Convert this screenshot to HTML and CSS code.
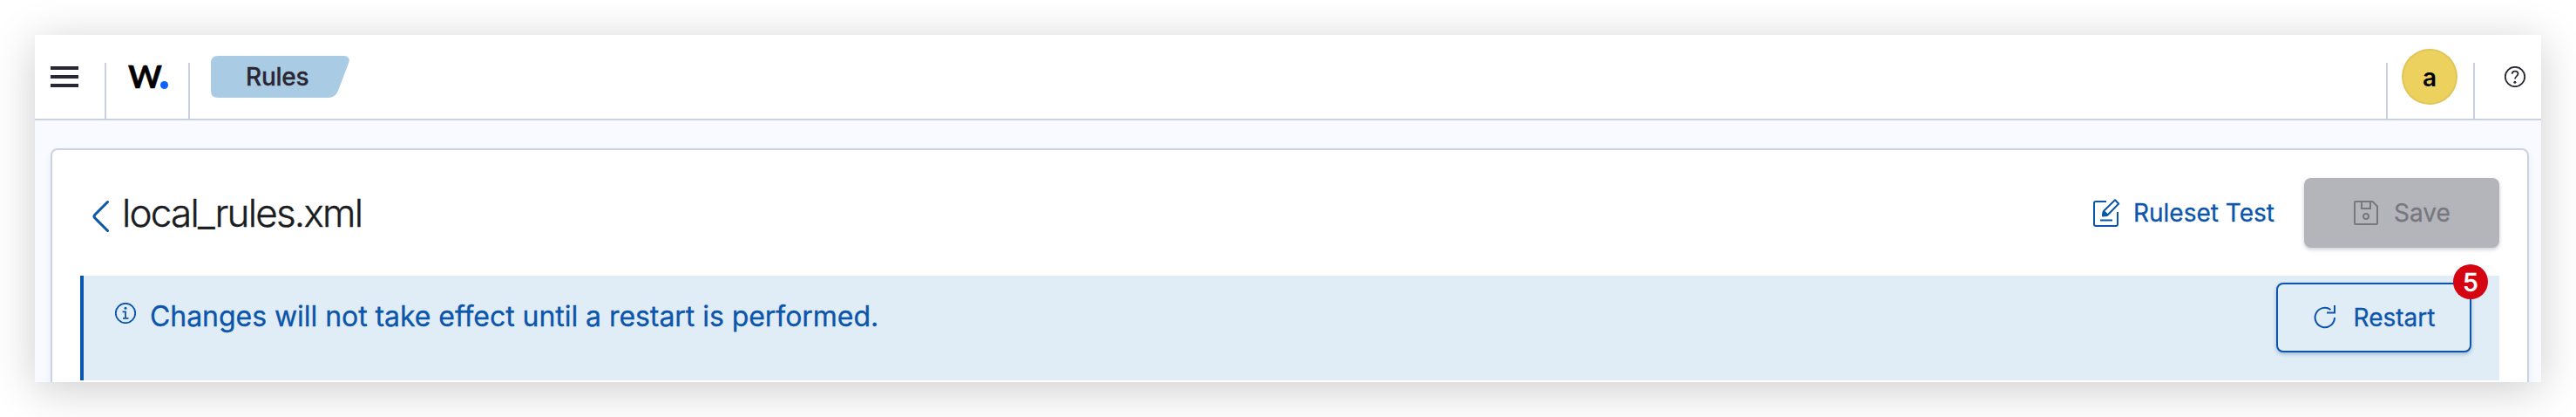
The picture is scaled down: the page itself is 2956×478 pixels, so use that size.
FILE: index.html
```html
<!DOCTYPE html>
<html lang="en">
<head>
<meta charset="utf-8">
<title>Rules</title>
<link rel="stylesheet" href="styles.css">
</head>
<body>
<div class="window">
  <header class="header">
    <button class="menu" aria-label="Menu"><span></span><span></span><span></span></button>
    <i class="divider"></i>
    <div class="logo"><span class="logo-letter">W</span><span class="logo-dot"></span></div>
    <i class="divider"></i>
    <div class="crumb">
      <svg class="crumb-shape" viewBox="0 0 160 48"><path d="M8 0H153Q160 1 158.500 7L146 40Q142.500 48 135 48H8Q0 48 0 40V8Q0 0 8 0Z"/></svg>
      <span class="crumb-text">Rules</span>
    </div>
    <div class="spacer"></div>
    <i class="divider"></i>
    <div class="avatar">a</div>
    <i class="divider"></i>
    <svg class="help" viewBox="0 0 24 24"><circle cx="12" cy="12" r="11.200"/><path d="M8.700 8.800C8.800 6.600 10.300 5.600 12.100 5.600C14.200 5.600 15.500 6.900 15.500 8.600C15.500 11.300 12 11.500 12 14.500"/><circle class="dot" cx="11.900" cy="18.300" r="1.500"/></svg>
  </header>
  <main class="page">
    <section class="panel">
      <div class="toolbar">
        <svg class="back" viewBox="0 0 20 38"><path d="M17.500 2.500L2.800 17.200Q1.200 19 2.800 20.800L17.500 35.500"/></svg>
        <h1 class="title">local_rules.xml</h1>
        <div class="spacer"></div>
        <a class="link">
          <svg class="edit-icon" viewBox="0 0 32 34"><path d="M16 4H4Q2 4 2 6V30Q2 32 4 32H27Q29 32 29 30V16M9 25.500H23M12 20L13 15L26 2.200L30.200 6.500L17.500 19.500L12 20ZM13 15L17.500 19.500"/><path class="tip" d="M12 20.500L12.700 16L16.500 20Z"/></svg>
          <span>Ruleset Test</span>
        </a>
        <button class="button save">
          <svg class="save-icon" viewBox="0 0 28 28"><path d="M2 1H21.500L27 6.500V26Q27 27 26 27H2Q1 27 1 26V2Q1 1 2 1ZM9 1V9H19V1"/><circle cx="14" cy="18" r="3"/></svg>
          <span>Save</span>
        </button>
      </div>
      <div class="callout">
        <svg class="info" viewBox="0 0 24 24"><circle cx="12" cy="12" r="11.200"/><path d="M8.500 10.300H12V17.900M9 17.900H15.500"/><circle class="dot" cx="12" cy="6.300" r="1.500"/></svg>
        <span class="message">Changes will not take effect until a restart is performed.</span>
        <div class="spacer"></div>
        <button class="button restart">
          <svg class="restart-icon" viewBox="0 0 26 30"><path d="M24 15A11.200 11.200 0 1 1 19.500 6M24 1V9.500H15"/></svg>
          <span>Restart</span>
          <span class="badge">5</span>
        </button>
      </div>
    </section>
  </main>
</div>
</body>
</html>
```
FILE: styles.css
```css
* { box-sizing: border-box; }
body {
  margin: 0;
  padding: 40px;
  height: 478px;
  overflow: hidden;
  background: #fff;
  font-family: Inter, "Liberation Sans", sans-serif;
}
button { border: 0; padding: 0; background: none; font: inherit; }
svg { display: block; flex: none; fill: none; stroke: currentColor; }
.window {
  width: 2876px;
  height: 398px;
  display: flex;
  flex-direction: column;
  box-shadow: 0 8px 48px rgba(0, 0, 0, .2);
}
.header {
  flex: none;
  height: 98px;
  display: flex;
  align-items: flex-start;
  background: #fff;
  border-bottom: 2px solid #c9d1e2;
}
.menu {
  display: flex;
  flex-direction: column;
  gap: 6px;
  margin: 36px 30px 0 18px;
  width: 32px;
}
.menu span { height: 4px; background: #2a2733; }
.divider { width: 2px; height: 64px; margin-top: 32px; background: #c9d1e2; flex: none; }
.logo {
  width: 94px;
  height: 96px;
  padding-left: 25px;
  display: flex;
  align-items: flex-start;
  color: #000;
}
.logo-letter { width: 37px; font: 700 37px/46px Lato, sans-serif; margin-top: 24px; -webkit-text-stroke: .5px #000; }
.logo-dot { width: 9px; height: 9px; border-radius: 50%; background: #0d62ff; margin-top: 53px; }
.crumb { display: grid; width: 160px; height: 48px; margin: 24px 0 0 24px; }
.crumb-shape, .crumb-text { grid-area: 1 / 1; }
.crumb-shape { width: 160px; height: 48px; fill: #aacbe4; stroke: none; }
.crumb-text { padding-left: 40px; font-size: 28px; line-height: 48px; font-weight: 500; letter-spacing: -.25px; color: #2a2733; -webkit-text-stroke: .3px currentColor; }
.spacer { flex: 1; }
.avatar {
  width: 64px;
  height: 64px;
  margin: 16px 18px 0 16px;
  border-radius: 50%;
  background: #edd15e;
  box-shadow: inset 0 0 0 2px rgba(0, 0, 0, .05);
  text-align: center;
  font-size: 28px;
  line-height: 66px;
  font-weight: 600;
  color: #000;
}
.help { width: 24px; height: 24px; margin: 36px 18px 0 34px; stroke-width: 1.8; color: #2a2733; }
.dot { fill: currentColor; stroke: none; }
.page { flex: 1; min-height: 0; overflow: hidden; padding: 32px 14px 0 18px; background: #f9faff; }
.panel {
  height: 320px;
  padding: 32px 32px 0;
  border: 2px solid #cad2e3;
  border-radius: 8px;
  background: #fff;
  box-shadow: 0 4px 8px rgba(80, 90, 150, .08);
}
.toolbar { display: flex; align-items: center; height: 80px; }
.back { width: 20px; height: 38px; margin: 8px 0 0 14px; stroke-width: 3; stroke-linecap: round; color: #0b55aa; }
.title { margin: 0 0 0 14px; font-size: 44px; font-weight: 300; line-height: 80px; letter-spacing: -1.76px; color: #1a1c21; -webkit-text-stroke: .4px currentColor; }
.link { display: flex; align-items: center; gap: 15px; margin-right: 34px; color: #0b55aa; font-size: 28px; -webkit-text-stroke: .3px currentColor; }
.edit-icon { width: 32px; height: 34px; stroke-width: 2; stroke-linejoin: round; }
.tip { fill: currentColor; }
.button { position: relative; display: flex; align-items: center; justify-content: center; width: 224px; height: 80px; border-radius: 8px; font-size: 28px; -webkit-text-stroke: .3px currentColor; }
.save { gap: 18px; padding-left: 1px; background: #b4b5ba; color: #77787f; box-shadow: 0 2px 4px rgba(60, 60, 90, .25); }
.save-icon { width: 28px; height: 28px; stroke-width: 2; }
.callout {
  display: flex;
  align-items: flex-start;
  height: 120px;
  margin-top: 32px;
  padding: 8px 32px 0 36px;
  border-left: 4px solid #0b55aa;
  background: #e0ecf6;
  color: #0b55aa;
}
.info { width: 24px; height: 24px; margin-top: 23px; stroke-width: 1.8; }
.message { margin-left: 16px; font-size: 32px; line-height: 48px; margin-top: 15px; letter-spacing: -.05px; white-space: nowrap; -webkit-text-stroke: .3px currentColor; }
.restart { gap: 20px; padding-left: 1px; border: 2px solid #0b55aa; color: #0b55aa; background: #e0ecf6; box-shadow: 0 2px 4px rgba(11, 65, 130, .3); }
.restart-icon { width: 26px; height: 30px; stroke-width: 2; }
.badge {
  position: absolute;
  top: -23px;
  right: -21px;
  width: 40px;
  height: 40px;
  border-radius: 50%;
  background: #d40511;
  color: #fff;
  font-size: 29px;
  font-weight: 500;
  line-height: 42px;
  text-align: center;
}
```
